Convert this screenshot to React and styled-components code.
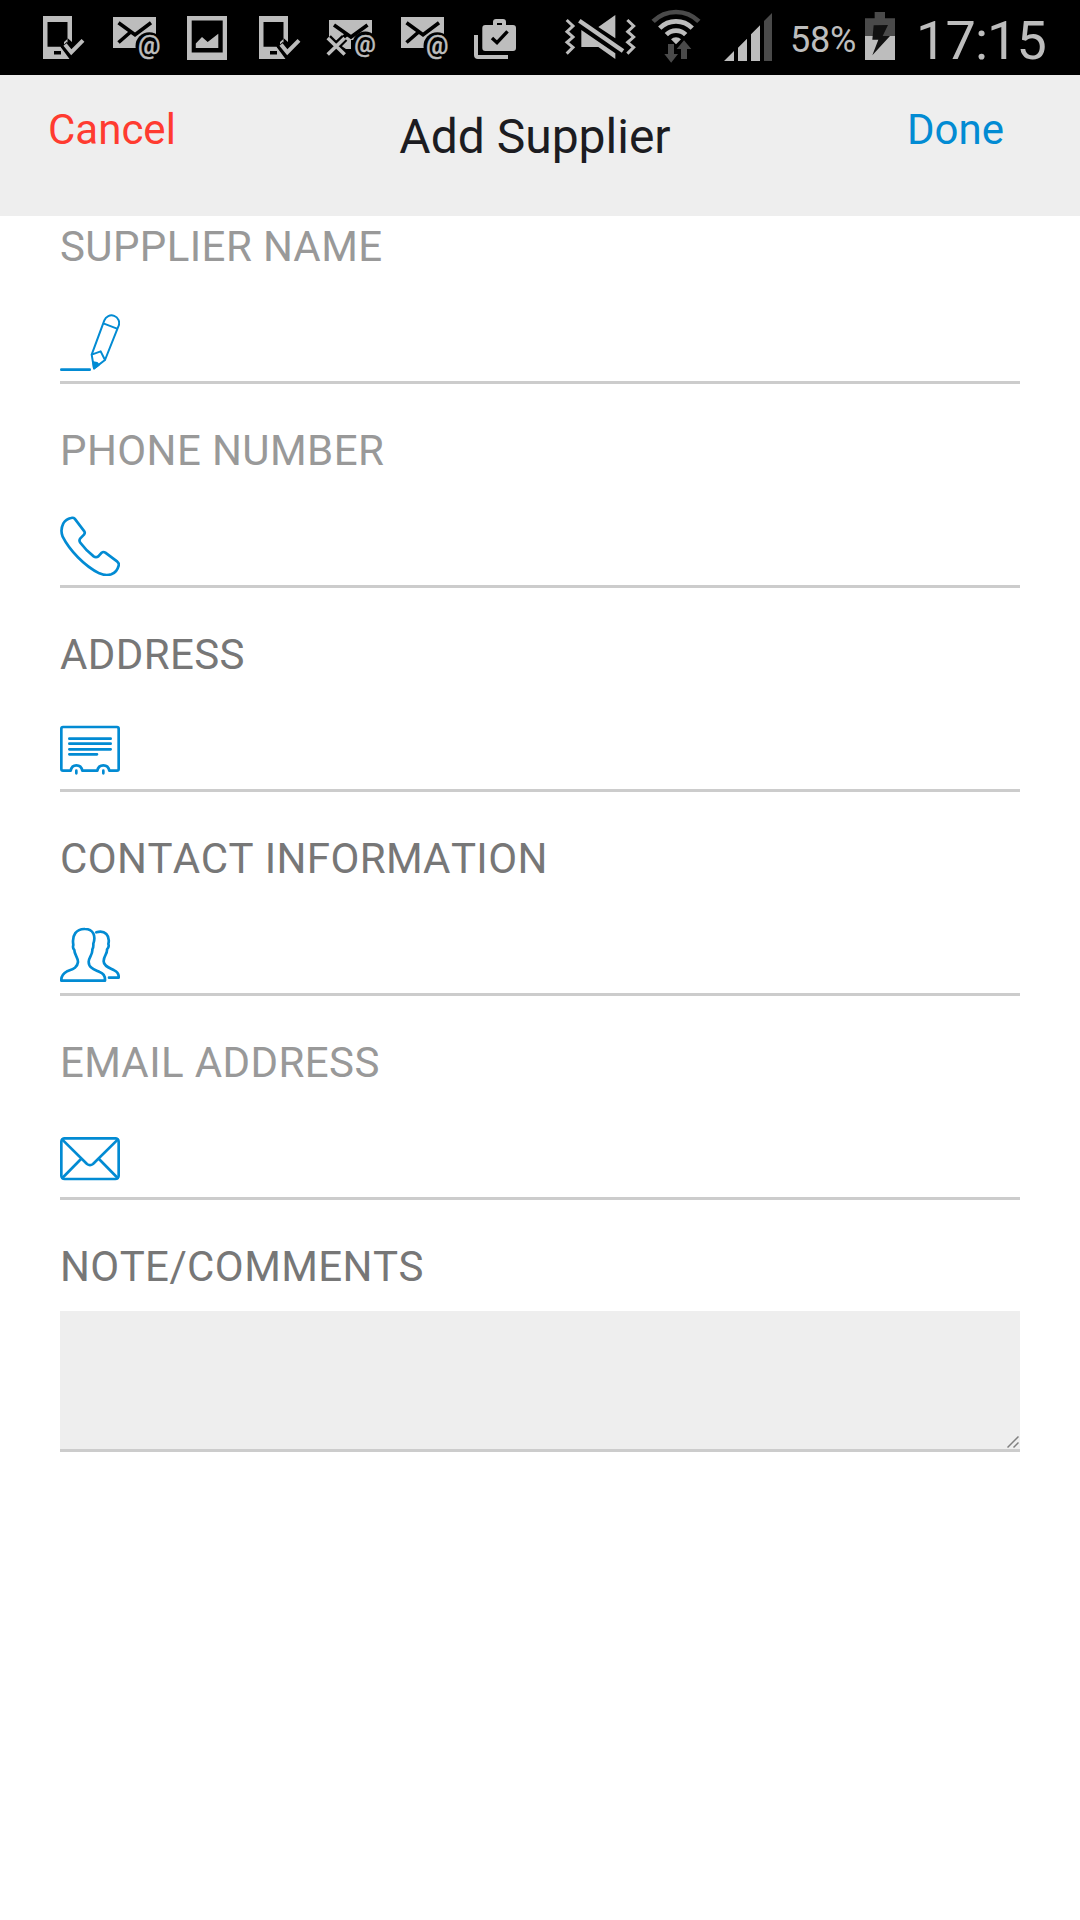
import React from 'react';
import styled, { createGlobalStyle } from 'styled-components';

const GlobalStyle = createGlobalStyle`
  * { box-sizing: border-box; }
  body { margin: 0; background: #fff; font-family: Roboto, "Liberation Sans", sans-serif; }
`;

const Screen = styled.div`
  width: 1080px;
  height: 1920px;
  display: flex;
  flex-direction: column;
  background: #fff;
  overflow: hidden;
`;

const StatusBar = styled.div`
  height: 75px;
  display: flex;
  background: #000;
  color: #bdbdbd;
  padding-left: 43px;
`;

const StatusGlyph = styled.svg`
  flex: none;
  display: block;
  width: ${(p) => p.$width}px;
  height: 75px;
  margin-right: ${(p) => p.$gap}px;
  overflow: visible;
`;

const StatusText = styled.span`
  flex: none;
  width: ${(p) => p.$width}px;
  font-size: ${(p) => p.$size}px;
  letter-spacing: ${(p) => p.$spacing || 0}px;
  line-height: 42px;
  padding-top: ${(p) => p.$top}px;
  white-space: nowrap;
`;

const Header = styled.header`
  height: 141px;
  display: grid;
  grid-template-columns: 1fr auto 1fr;
  align-items: start;
  padding: 0 58px 0 48px;
  background: #eee;
`;

const HeaderButton = styled.button`
  justify-self: ${(p) => p.$side};
  margin: 25px ${(p) => (p.$side === 'end' ? 18 : 0)}px 0 0;
  padding: 0;
  border: 0;
  background: none;
  font: 42px/60px Roboto, "Liberation Sans", sans-serif;
  color: ${(p) => p.$color};
`;

const Title = styled.h1`
  margin: 32px 0 0;
  font-size: 48px;
  line-height: 60px;
  font-weight: 400;
  color: #1c1c21;
`;

const Form = styled.form`
  padding: 1px 60px 0;
  display: flex;
  flex-direction: column;
  gap: 37px;
`;

const Field = styled.div`
  display: flex;
  flex-direction: column;
`;

const Label = styled.label`
  font-size: 42px;
  line-height: 60px;
  letter-spacing: 0.4px;
  font-kerning: none;
  color: ${(p) => (p.$dark ? '#777' : '#999')};
`;

const InputRow = styled.div`
  height: 107px;
  display: flex;
  align-items: flex-end;
  padding-bottom: 9px;
  border-bottom: 3px solid #ccc;
`;

const FieldIcon = styled.svg`
  flex: none;
  width: 60px;
  height: 60px;
  fill: none;
  stroke: #028bd3;
  stroke-width: 8;
  stroke-linecap: round;
  stroke-linejoin: round;
`;

const FineStroke = styled.g`
  stroke-width: 6;
`;

const Input = styled.input`
  flex: 1;
  min-width: 0;
  height: 60px;
  margin-left: 20px;
  border: 0;
  padding: 0;
  outline: 0;
  background: transparent;
  font: 42px Roboto, sans-serif;
`;

const NoteBox = styled.div`
  position: relative;
  height: 141px;
  margin-top: 14px;
  background: #eee;
  border-bottom: 3px solid #ccc;
`;

const NoteArea = styled.textarea`
  display: block;
  width: 100%;
  height: 100%;
  border: 0;
  padding: 12px;
  outline: 0;
  resize: none;
  background: transparent;
  font: 42px Roboto, sans-serif;
`;

const ResizeGrip = styled.svg`
  position: absolute;
  right: 1px;
  bottom: 1px;
  width: 12px;
  height: 12px;
`;

const GREY = '#bdbdbd';
const DARK = '#4a4a4a';

function PhoneCheck({ gap }) {
  return (
    <StatusGlyph $width={42} $gap={gap} viewBox="0 0 42 75">
      <path fill={GREY} fillRule="evenodd" d="M0 16H29V42L25 38.5L21 42V46.8L17.5 46.8L26.5 59H0ZM4.5 22V46.8H21L24.5 43V22ZM11 51V54.5H18V51Z" />
      <path d="M21 44.5L28.3 52.6L41 39.8" fill="none" stroke="#000" strokeWidth="8" />
      <path d="M22 44.5L28.3 52.2L40 40.4" fill="none" stroke={GREY} strokeWidth="4" />
    </StatusGlyph>
  );
}

function MailAt({ gap }) {
  return (
    <StatusGlyph $width={47} $gap={gap} viewBox="0 0 47 75">
      <rect x="0" y="17" width="43" height="31" fill={GREY} />
      <path d="M5.5 22.8L22 34.8L38 22.8M5.5 42.5L17 32.5" fill="none" stroke="#000" strokeWidth="3.6" />
      <circle cx="36.3" cy="46" r="13.8" fill="#000" />
      <text x="36.3" y="53.6" textAnchor="middle" fontSize="25" fontWeight="500" fontFamily="Roboto, sans-serif" fill={GREY} stroke={GREY} strokeWidth="0.4">@</text>
    </StatusGlyph>
  );
}

function MailFailed({ gap }) {
  return (
    <StatusGlyph $width={47} $gap={gap} viewBox="0 0 47 75">
      <path d="M0 20H43V40H22V49H17L0 38Z" fill={GREY} />
      <path d="M5 25L22 37L38.5 25M5 45L17 35" fill="none" stroke="#000" strokeWidth="3.6" />
      <path d="M-1 38L15.5 54.5M15.5 38L-1 54.5" stroke="#000" strokeWidth="8" />
      <path d="M-1.3 38L15.7 54.5M15.7 38L-1.3 54.5" stroke={GREY} strokeWidth="3.6" />
      <circle cx="36.3" cy="44.5" r="13" fill="#000" />
      <text x="36" y="51.6" textAnchor="middle" fontSize="24" fontWeight="500" fontFamily="Roboto, sans-serif" fill={GREY} stroke={GREY} strokeWidth="0.4">@</text>
    </StatusGlyph>
  );
}

const Sheet = ({ gap }) => (
  <StatusGlyph $width={40} $gap={gap} viewBox="0 0 40 75">
    <path fill={GREY} fillRule="evenodd" d="M0 16H40V60H0ZM4.7 20.5V52.5H35.7V20.5Z" />
    <path fill={GREY} d="M8.8 48V43.5L15 37L20.7 42L31.3 33.7V48Z" />
  </StatusGlyph>
);

const Bag = ({ gap }) => (
  <StatusGlyph $width={42} $gap={gap} viewBox="0 0 42 75">
    <path d="M2 35V55Q2 57 4 57H34" fill="none" stroke={GREY} strokeWidth="4" />
    <path fill={GREY} fillRule="evenodd" d="M11.3 25H19V22Q19 19 22 19H29Q32 19 32 22V25H39Q42 25 42 28V48Q42 51 39 51H11.3Q8.3 51 8.3 48V28Q8.3 25 11.3 25ZM23 23V25H28V23Z" />
    <path d="M18 38L23 42.7L33.5 31.3" fill="none" stroke="#000" strokeWidth="3.4" />
  </StatusGlyph>
);

const Muted = ({ gap }) => (
  <StatusGlyph $width={70} $gap={gap} viewBox="50 0 210 225">
    <g fill="none" stroke={GREY} strokeWidth="9">
      <path d="M52 60L71 78L53 95L71 111L53 127L71 142L52 161" />
      <path d="M234 60L253 78L235 95L253 111L235 127L253 142L234 161" />
    </g>
    <path fill={GREY} d="M147 81L198 45V115ZM96 90L198 160V177L147 141H96Z" />
    <path d="M90 62L221 153" stroke={GREY} strokeWidth="13" />
  </StatusGlyph>
);

const Wifi = ({ gap }) => (
  <StatusGlyph $width={50} $gap={gap} viewBox="303 0 150 225">
    <path d="M309.4 64.4A97 97 0 0 1 446.6 64.4" fill="none" stroke={DARK} strokeWidth="14" />
    <path d="M329.2 84.2A69 69 0 0 1 426.8 84.2M349 104A41 41 0 0 1 407 104" fill="none" stroke={GREY} strokeWidth="14" />
    <path d="M363 118A21 21 0 0 1 393 118L378 133Z" fill={GREY} />
    <path fill={DARK} d="M354 132H372V162H384L363.5 188L343 162H354ZM402 121L424 147H411V177H393V147H380Z" />
  </StatusGlyph>
);

const Signal = ({ gap }) => (
  <StatusGlyph $width={48} $gap={gap} viewBox="522 0 144 225">
    <path fill={GREY} d="M522 183L552 153V183ZM564 143L591 116V183H564ZM603 103L630 76V183H603Z" />
    <path fill={DARK} d="M642 63L666 39V183H642Z" />
  </StatusGlyph>
);

const Battery = ({ gap }) => (
  <StatusGlyph $width={30} $gap={gap} viewBox="255 0 90 225">
    <path fill={DARK} d="M255 55H284V36H315V55H345V108H255Z" />
    <rect x="255" y="108" width="90" height="72" fill={GREY} />
    <path fill="#111" d="M281 76L324 75L308 108H330L277 166L295 119H277Z" />
  </StatusGlyph>
);

const Pencil = () => (
  <FieldIcon viewBox="30 36 180 180">
    <path d="M34 209H119" />
    <FineStroke>
      <path d="M125 164L163 61A22.5 22.5 0 0 1 206 77L165 180L132 205ZM162 71L201 86M125 164L152 154L165 180" />
      <path d="M130 187L141 189L146 195L132 205Z" fill="#028bd3" />
    </FineStroke>
  </FieldIcon>
);

const Handset = () => (
  <FieldIcon viewBox="30 48 180 180">
    <path d="M74 56L103 94Q106 99 102 104L91 115Q86 121 91 128Q108 151 131 169Q138 174 145 169L155 158Q160 154 166 158L202 185Q208 190 206 197Q201 217 184 223Q166 228 148 220C103 198 58 150 38 110Q30 90 40 70Q48 57 63 54Q70 52 74 56Z" />
  </FieldIcon>
);

const AddressCard = () => (
  <FieldIcon viewBox="30 30 180 180">
    <path d="M62 182H39Q34 182 34 177V56Q34 51 39 51H201Q206 51 206 56V177Q206 182 201 182H178Q175 166 160 166Q145 166 142 182H97Q94 166 79 166Q65 166 62 182Z" />
    <path d="M58 86H182M58 101H182M58 118H182M58 133H141M79 182V190M160 182V190" />
  </FieldIcon>
);

const People = () => (
  <FieldIcon viewBox="30 42 180 180">
    <path d="M34 212H165C166 198 160 190 149 186C132 178 116 174 116 155C116 142 129 133 127 118C131 113 130 107 130 101C138 78 130 57 105 57C79 56 65 75 70 105C68 111 69 116 73 120C73 134 84 141 84 156C82 175 66 178 51 184C40 190 33 197 34 212Z" />
    <path d="M139 67C165 59 181 77 175 102C178 109 175 114 171 118C173 131 161 137 161 153C160 169 180 174 193 181C203 186 207 194 206 203H177" />
  </FieldIcon>
);

const Envelope = () => (
  <FieldIcon viewBox="30 24 180 180">
    <rect x="34" y="55" width="172" height="122" rx="10" />
    <path d="M37 59L111 132Q120 139 129 132L203 59M37 174L93 117M203 174L147 117" />
  </FieldIcon>
);

const fields = [
  { id: 'name', label: 'SUPPLIER NAME', Icon: Pencil },
  { id: 'phone', label: 'PHONE NUMBER', Icon: Handset },
  { id: 'address', label: 'ADDRESS', Icon: AddressCard, dark: true },
  { id: 'contact', label: 'CONTACT INFORMATION', Icon: People, dark: true },
  { id: 'email', label: 'EMAIL ADDRESS', Icon: Envelope },
];

export default function App() {
  return (
    <Screen>
      <GlobalStyle />
      <StatusBar>
        <PhoneCheck gap={28} />
        <MailAt gap={27} />
        <Sheet gap={32} />
        <PhoneCheck gap={28} />
        <MailFailed gap={25} />
        <MailAt gap={26} />
        <Bag gap={50} />
        <Muted gap={15} />
        <Wifi gap={23} />
        <Signal gap={18} />
        <StatusText $width={75} $size={36} $top={19} $spacing={-0.2}>58%</StatusText>
        <Battery gap={21} />
        <StatusText $width={140} $size={54} $top={20} $spacing={-0.9}>17:15</StatusText>
      </StatusBar>
      <Header>
        <HeaderButton $side="start" $color="#ff3b30">Cancel</HeaderButton>
        <Title>Add Supplier</Title>
        <HeaderButton $side="end" $color="#028bd3">Done</HeaderButton>
      </Header>
      <Form>
        {fields.map(({ id, label, Icon, dark }) => (
          <Field key={id}>
            <Label htmlFor={id} $dark={dark}>{label}</Label>
            <InputRow>
              <Icon />
              <Input id={id} />
            </InputRow>
          </Field>
        ))}
        <Field>
          <Label htmlFor="note" $dark>NOTE/COMMENTS</Label>
          <NoteBox>
            <NoteArea id="note" />
            <ResizeGrip viewBox="0 0 12 12">
              <path d="M0.5 11.5L11.5 0.5M6.5 11.5L11.5 6.5" stroke="#808080" strokeWidth="1.5" />
            </ResizeGrip>
          </NoteBox>
        </Field>
      </Form>
    </Screen>
  );
}
